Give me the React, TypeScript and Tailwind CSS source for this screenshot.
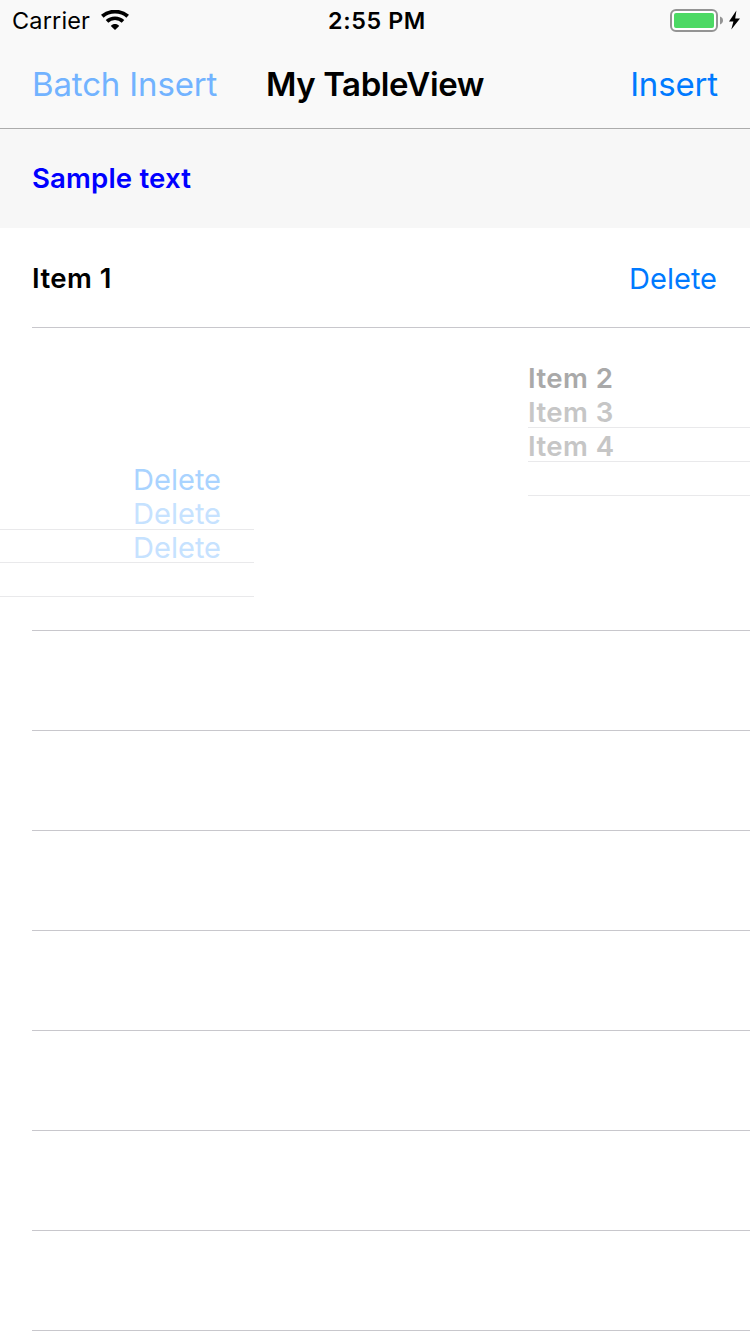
import React from "react";

const movingLabels = [
  { text: "Item 2", tone: "text-[#a9a9a9]", line: "border-transparent" },
  { text: "Item 3", tone: "text-[#c6c6c6]", line: "border-[#e9e9eb]" },
  { text: "Item 4", tone: "text-[#c6c6c6]", line: "border-[#e9e9eb]" },
  { text: "", tone: "", line: "border-[#e9e9eb]" },
];

const movingButtons = [
  { text: "Delete", tone: "text-[#a9d3ff]", size: "h-[33px] pt-[2px]", line: "border-transparent" },
  { text: "Delete", tone: "text-[#c6e2ff]", size: "h-[34px] pt-[3px]", line: "border-[#e9e9eb]" },
  { text: "Delete", tone: "text-[#c6e2ff]", size: "h-[33px] pt-[4px]", line: "border-[#e9e9eb]" },
  { text: "", tone: "", size: "h-[34px]", line: "border-[#e9e9eb]" },
];

function WifiIcon() {
  return (
    <svg width="28" height="20" viewBox="0 0 28 20" fill="none">
      <path d="M1.3 6.3C8.3 0.1 19.7 0.1 26.7 6.3" stroke="#000" strokeWidth="3.9" />
      <path d="M6 11.4C10.4 7.2 17.6 7.2 22 11.4" stroke="#000" strokeWidth="3.7" />
      <path d="M14 20L9.8 16C12.1 13.4 15.9 13.4 18.2 16Z" fill="#000" />
    </svg>
  );
}

function BatteryIcon() {
  return (
    <svg width="72" height="24" viewBox="0 0 72 24">
      <rect x="1" y="1" width="46" height="21" rx="5" fill="#fff" stroke="#949494" strokeWidth="2" />
      <rect x="4" y="4" width="40" height="15" rx="2" fill="#4cd964" />
      <path d="M50 7.5C52.2 8.3 53 9.7 53 11.5S52.2 14.7 50 15.5Z" fill="#949494" />
      <path d="M66.4 1.5L59 12.5H63.4L61.3 20.5L70 9.5H65.2Z" fill="#000" />
    </svg>
  );
}

export default function App() {
  return (
    <div className="flex h-[1334px] w-[750px] flex-col overflow-hidden bg-white font-['Inter',sans-serif] text-black">
      <header className="h-[129px] shrink-0 border-b border-[#acacac] bg-[#f9f9f9]">
        <div className="grid h-[40px] grid-cols-[1fr_auto_1fr] items-center pl-3 pr-2 pt-[2px]">
          <div className="flex items-center gap-[11px]">
            <span className="text-[23.5px] leading-[38px] tracking-[0.15px]">Carrier</span>
            <div className="pb-[2px]">
              <WifiIcon />
            </div>
          </div>
          <span className="text-[23.3px] font-[560] leading-[38px] tracking-[0.6px]">2:55 PM</span>
          <div className="flex justify-end">
            <BatteryIcon />
          </div>
        </div>
        <div className="grid h-[88px] grid-cols-[1fr_auto_1fr] items-center px-8 text-[33px] leading-[88px]">
          <span className="whitespace-nowrap tracking-[-0.15px] text-[#72b3ff]">Batch Insert</span>
          <h1 className="font-semibold tracking-[-0.4px]">My TableView</h1>
          <button className="text-right tracking-[-0.15px] text-[#007aff]">Insert</button>
        </div>
      </header>

      <section className="flex h-[99px] shrink-0 items-center bg-[#f7f7f7] pl-8 text-[27.6px] font-semibold tracking-[0.15px] text-[#0000ff]">
        Sample text
      </section>

      <main className="flex flex-col">
        <div className="ml-8 flex h-[100px] shrink-0 items-center justify-between border-b border-[#c8c7cc] pr-[33px] pt-[2px]">
          <span className="text-[27.6px] font-semibold tracking-[0.4px]">Item 1</span>
          <button className="text-[29px] text-[#007aff]">Delete</button>
        </div>

        <div className="flex h-[302px] shrink-0 justify-between">
          <div className="w-[254px] pt-[135px]">
            {movingButtons.map((row, i) => (
              <div key={i} className={`flex items-center justify-end border-b pr-[33px] text-[29px] ${row.size} ${row.tone} ${row.line}`}>
                {row.text}
              </div>
            ))}
          </div>
          <div className="w-[222px] pt-[32px]">
            {movingLabels.map((row, i) => (
              <div key={i} className={`flex h-[34px] items-center border-b pt-[2px] text-[27.6px] font-semibold leading-[26px] tracking-[0.4px] ${row.tone} ${row.line}`}>
                {row.text}
              </div>
            ))}
          </div>
        </div>

        <div className="ml-8 h-px shrink-0 bg-[#c8c7cc]" />
        {Array.from({ length: 7 }, (_, i) => (
          <div key={i} className="ml-8 h-[100px] shrink-0 border-b border-[#c8c7cc]" />
        ))}
      </main>
    </div>
  );
}
